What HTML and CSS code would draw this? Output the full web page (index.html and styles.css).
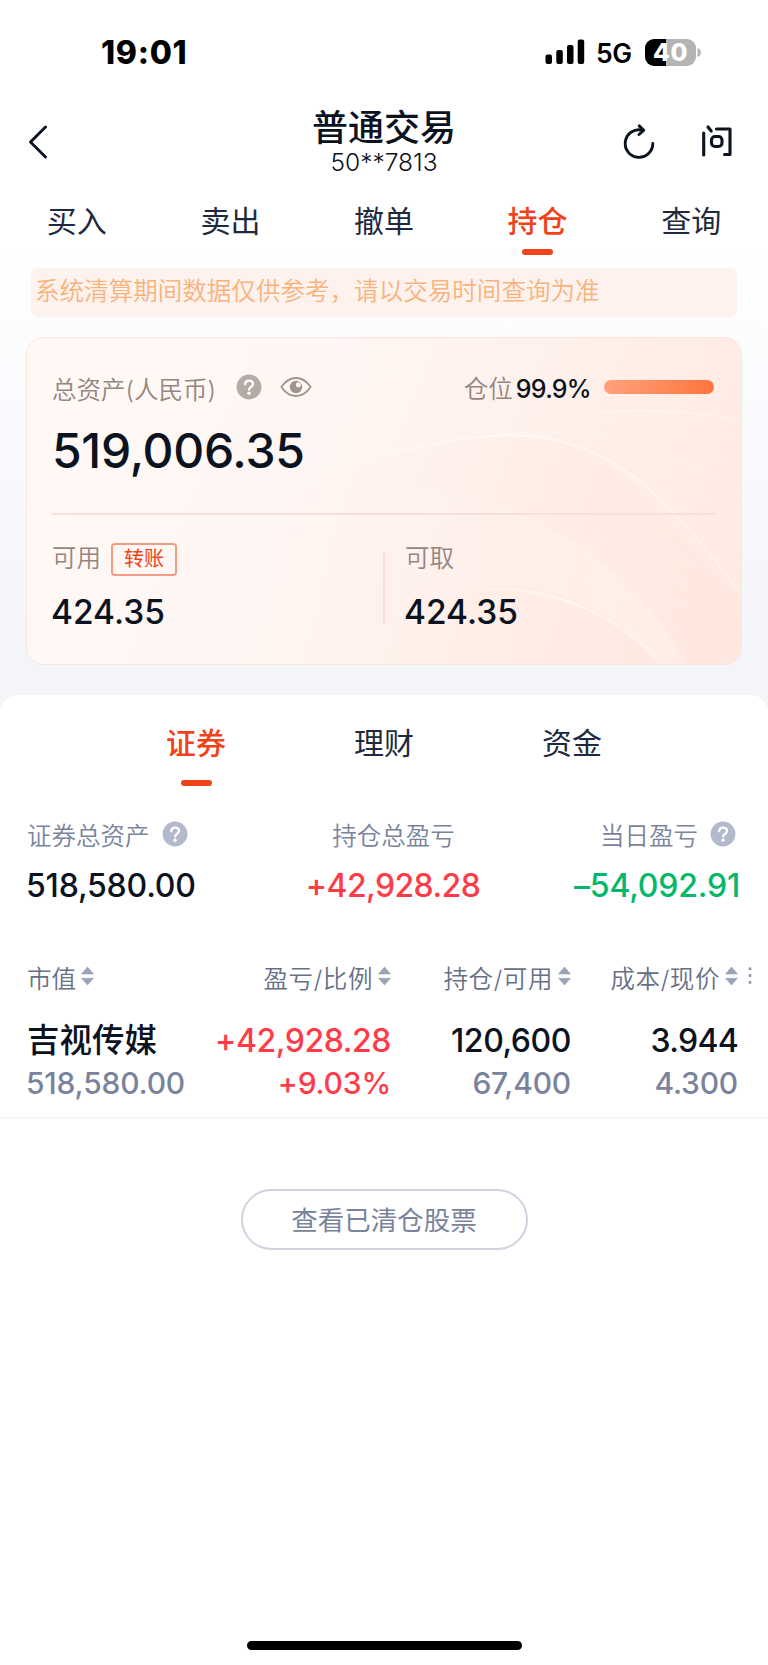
FILE: index.html
```html
<!DOCTYPE html>
<html lang="zh-CN">
<head>
<meta charset="utf-8">
<title>普通交易</title>
<link rel="stylesheet" href="styles.css">
</head>
<body>
<svg class="defs" width="0" height="0">
  <symbol id="help" viewBox="0 0 26 26">
    <circle cx="13" cy="13" r="12.4" fill="currentColor"/>
    <path d="M9.2 10.3c0-2.200 1.600-3.700 3.900-3.700s3.900 1.400 3.900 3.400c0 2.700-3.900 2.900-3.900 5.600" fill="none" stroke="#fff" stroke-width="2.300" stroke-linecap="round"/>
    <circle cx="13" cy="19.300" r="1.700" fill="#fff"/>
  </symbol>
  <symbol id="sort" viewBox="0 0 13 20">
    <path d="M6.500 1 12.500 8H.5Z M6.500 19 .5 12.300h12Z" fill="currentColor" stroke="currentColor" stroke-width=".6" stroke-linejoin="round"/>
  </symbol>
</svg>
<div class="screen">
  <div class="top">
    <div class="status">
      <span class="time">19:01</span>
      <div class="status-right">
        <svg class="signal" width="40" height="26" viewBox="0 0 40 26"><rect x="0.500" y="15.500" width="6.500" height="9.500" rx="2"/><rect x="11.300" y="11" width="6.500" height="14" rx="2"/><rect x="22" y="6" width="6.500" height="19" rx="2"/><rect x="32.700" y="0.500" width="6.500" height="24.500" rx="2"/></svg>
        <span class="net">5G</span>
        <div class="battery"><span class="level">40</span><svg class="nub" width="5" height="9" viewBox="0 0 5 9"><path d="M0.500 0C5 1.500 5 7.500 0.500 9Z" fill="#b4b4b4"/></svg></div>
      </div>
    </div>
    <div class="header">
      <svg class="back" width="20" height="34" viewBox="0 0 20 34"><path d="M17.500 2 2.500 17 17.500 32" fill="none" stroke="#0b1220" stroke-width="2.900" stroke-linecap="round" stroke-linejoin="round"/></svg>
      <div class="heading"><div class="title">普通交易</div><div class="account">50**7813</div></div>
      <div class="actions">
        <svg width="34" height="36" viewBox="0 0 34 36" fill="none" stroke="#0b1220" stroke-width="2.900" stroke-linecap="round" stroke-linejoin="round"><path d="M30.800 19.500A13.800 13.800 0 1 1 20.200 6.100"/><path d="M17.200 1.900 21.700 6.300 17 10.500"/></svg>
        <svg width="34" height="34" viewBox="0 0 34 34" fill="none" stroke="#0b1220" stroke-width="3.100" stroke-linecap="round" stroke-linejoin="round"><path d="M3.700 9V31"/><path d="M8 3 11.200 7"/><path d="M16.500 5H30V30.500H24.500"/><rect x="11.500" y="12.500" width="10.500" height="10" rx="3.500"/></svg>
      </div>
    </div>
    <div class="tabs">
      <div class="tab">买入</div><div class="tab">卖出</div><div class="tab">撤单</div><div class="tab active">持仓</div><div class="tab">查询</div>
    </div>
    <div class="notice">系统清算期间数据仅供参考，请以交易时间查询为准</div>
    <div class="card">
      <svg class="waves" viewBox="0 0 716 328" preserveAspectRatio="none">
        <defs>
          <linearGradient id="fa" x1="0" y1="0" x2="1" y2="0"><stop offset="0" stop-color="#fff" stop-opacity="0"/><stop offset=".5" stop-color="#fff" stop-opacity=".6"/><stop offset="1" stop-color="#fff" stop-opacity=".3"/></linearGradient>
          <linearGradient id="fb" x1="0" y1="0" x2="1" y2="0"><stop offset="0" stop-color="#ffd9cb" stop-opacity="0"/><stop offset="1" stop-color="#ffd9cb" stop-opacity=".15"/></linearGradient>
          <linearGradient id="fc" x1="0" y1="0" x2="1" y2="0"><stop offset="0" stop-color="#fff" stop-opacity="0"/><stop offset="1" stop-color="#fff" stop-opacity=".24"/></linearGradient>
          <pattern id="lines" width="12" height="6" patternUnits="userSpaceOnUse" patternTransform="rotate(8)"><path d="M0 3H12" stroke="#fff" stroke-opacity=".16"/></pattern>
        </defs>
        <path d="M250 145C370 115 430 97 490 98 590 99 640 190 716 262V328H250Z" fill="url(#fb)"/>
        <path d="M300 150C480 140 600 210 660 328H636C590 275 510 225 410 260Z" fill="url(#fc)"/>
        <path d="M500 94C570 68 640 70 716 82V262C640 180 590 99 500 98Z" fill="url(#lines)"/>
        <path d="M560 200C620 180 670 205 716 262V328H636C610 300 590 280 560 262Z" fill="url(#lines)"/>
        <path d="M250 145C370 115 430 97 490 98 590 99 650 170 716 257" fill="none" stroke="url(#fa)" stroke-width="2"/>
        <path d="M500 90C570 68 640 70 716 82" fill="none" stroke="url(#fa)" stroke-width="1.200"/>
        <path d="M430 257C510 240 590 275 636 328" fill="none" stroke="url(#fa)" stroke-width="2.500"/>
      </svg>
      <div class="card-top">
        <span class="label">总资产(人民币)</span>
        <svg class="help warm" width="26" height="26"><use href="#help"/></svg>
        <svg class="eye" width="32" height="22" viewBox="0 0 32 22"><path d="M1.300 11C5.500 5 10.500 2 16 2s10.500 3 14.700 9C26.500 17 21.500 20 16 20S5.500 17 1.300 11Z" fill="none" stroke="#a1948f" stroke-width="1.800" stroke-linejoin="round"/><circle cx="16" cy="11" r="6.200" fill="#a1948f"/><circle cx="18.400" cy="8.700" r="2.500" fill="#fff8f5"/></svg>
        <span class="label pos">仓位</span><span class="pct">99.9%</span>
        <div class="bar"></div>
      </div>
      <div class="total">519,006.35</div>
      <div class="split">
        <div class="cell"><div class="row"><span class="label">可用</span><span class="transfer">转账</span></div><div class="amount">424.35</div></div>
        <div class="cell second"><div class="row"><span class="label">可取</span></div><div class="amount">424.35</div></div>
      </div>
    </div>
  </div>
  <div class="sheet">
    <div class="subtabs"><div class="subtab active">证券</div><div class="subtab">理财</div><div class="subtab">资金</div></div>
    <div class="summary">
      <div class="stat"><div class="stat-label">证券总资产<svg class="help cool" width="26" height="26"><use href="#help"/></svg></div><div class="value">518,580.00</div></div>
      <div class="stat mid"><div class="stat-label">持仓总盈亏</div><div class="value red signed">+42,928.28</div></div>
      <div class="stat end"><div class="stat-label">当日盈亏<svg class="help cool" width="26" height="26"><use href="#help"/></svg></div><div class="value green">–54,092.91</div></div>
    </div>
    <div class="grid head">
      <div class="th left">市值<svg class="sort" width="13" height="20"><use href="#sort"/></svg></div>
      <div class="th">盈亏/比例<svg class="sort" width="13" height="20"><use href="#sort"/></svg></div>
      <div class="th">持仓/可用<svg class="sort" width="13" height="20"><use href="#sort"/></svg></div>
      <div class="th">成本/现价<svg class="sort" width="13" height="20"><use href="#sort"/></svg></div>
      <svg class="more" width="4" height="18" viewBox="0 0 4 18" fill="#8b93a7"><rect x=".7" y=".5" width="2.600" height="2.600"/><rect x=".7" y="7.300" width="2.600" height="2.600"/><rect x=".7" y="14.100" width="2.600" height="2.600"/></svg>
    </div>
    <div class="grid holding">
      <div class="td left"><div class="name">吉视传媒</div><div class="sub">518,580.00</div></div>
      <div class="td red"><div class="main">+42,928.28</div><div class="sub pc">+9.03%</div></div>
      <div class="td"><div class="main">120,600</div><div class="sub">67,400</div></div>
      <div class="td last"><div class="main">3.944</div><div class="sub">4.300</div></div>
    </div>
    <div class="closed">查看已清仓股票</div>
    <div class="home"></div>
  </div>
</div>
</body>
</html>
```
FILE: styles.css
```css
* { box-sizing: border-box; }
body { margin: 0; background: #fff; font-family: Inter, "Noto Sans CJK SC", sans-serif; color: #0b1220; }
svg { display: block; flex: none; }
.defs { position: absolute; }
.screen { width: 768px; height: 1665px; display: flex; flex-direction: column; overflow: hidden; background: #f3f5f9; }
.top { height: 695px; flex: none; background: linear-gradient(#fff 0, #fff 250px, #fbfcfe 360px, #f3f5f9 640px); }

.status { height: 104px; display: flex; justify-content: space-between; padding: 32px 66px 0 101px; color: #000; }
.time { font-size: 32px; line-height: 41px; font-weight: 800; letter-spacing: .7px; }
.status-right { display: flex; align-items: center; height: 40px; }
.signal { margin-top: -1px; }
.net { margin-left: 11px; width: 38px; font-size: 26.500px; font-weight: 600; line-height: 40px; letter-spacing: -.3px; padding-top: 2px; }
.battery { display: flex; align-items: center; margin-left: 11px; }
.level { width: 51px; height: 27px; border-radius: 9px; background: linear-gradient(90deg, #000 41%, #b4b4b4 41%); color: #fff; font-size: 24.500px; line-height: 27px; font-weight: 800; text-align: center; letter-spacing: .5px; }
.nub { margin-left: 1px; }

.header { height: 76px; display: grid; grid-template-columns: 1fr 200px 1fr; padding: 0 34px 0 28px; }
.back { margin-top: 21px; }
.heading { text-align: center; margin: 0 -6px 0 0; padding-top: 4px; }
.title { font-size: 36px; line-height: 40px; font-weight: 500; white-space: nowrap; }
.account { font-size: 24.500px; line-height: 28px; font-weight: 300; }
.actions { display: flex; justify-content: flex-end; gap: 44px; padding-top: 20px; }

.tabs { height: 88px; display: grid; grid-template-columns: repeat(5, 1fr); }
.tab { display: flex; flex-direction: column; align-items: center; font-size: 30px; line-height: 44px; padding-top: 19px; color: #20293d; }
.tab.active, .subtab.active { color: #f0431a; font-weight: 500; }
.tab.active::after, .subtab.active::after { content: ""; width: 31px; height: 6px; border-radius: 3px; background: #f0431a; }
.tab.active::after { margin-top: 6px; }

.notice { width: 706px; height: 49px; margin-left: 31px; padding-left: 4px; border-radius: 7px; background: #fdf2ee; color: #fab27c; font-size: 24.550px; line-height: 47px; font-weight: 350; white-space: nowrap; }

.card { position: relative; width: 716px; height: 328px; margin: 20px 0 0 26px; padding: 0 26px 0 25px; border: 1.500px solid #fee4dd; border-radius: 18px; overflow: hidden; background: linear-gradient(112deg, #fff9f5 0, #fff6f3 40%, #fff0ea 66%, #ffe9e2 100%); }
.waves { position: absolute; inset: 0; width: 100%; height: 100%; }
.card-top, .total, .split { position: relative; }
.card-top { display: flex; align-items: center; height: 50px; margin-top: 24px; }
.label { font-size: 24.500px; line-height: 34px; color: #94857f; font-weight: 350; white-space: nowrap; }
.card-top .label { padding-top: 5px; }
.help.warm { color: #b6aaa6; margin-left: 20px; }
.eye { margin-left: 18px; }
.card-top .pos { margin-left: auto; padding-top: 3px; }
.pct { margin-left: 3px; padding-top: 3px; font-size: 25px; font-weight: 500; letter-spacing: -.7px; }
.bar { width: 110px; height: 14px; margin-left: 13px; margin-right: 1px; border-radius: 7px; background: linear-gradient(90deg, #ffa27c, #ff753d); }
.total { height: 103px; font-size: 48px; line-height: 77px; font-weight: 500; letter-spacing: -.3px; border-bottom: 2px solid #f7e0dc; }
.split { display: grid; grid-template-columns: 331px 1fr; padding-top: 36px; }
.cell { height: 73px; }
.second { border-left: 2px solid #f9dcd9; padding-left: 20px; }
.row { display: flex; align-items: center; height: 34px; margin-top: -10px; }
.transfer { height: 33px; width: 66px; margin-left: 10px; border: 2px solid #f79a83; border-radius: 4px; color: #f0431a; font-size: 20px; line-height: 29px; text-align: center; margin-top: 2px; }
.amount { font-size: 33.500px; line-height: 40px; font-weight: 500; margin: 17px 0 0 -1px; }

.sheet { flex: 1; background: #fff; border-radius: 18px 18px 0 0; display: flex; flex-direction: column; }
.subtabs { height: 118px; display: grid; grid-template-columns: repeat(3, 188px); justify-content: center; }
.subtab { display: flex; flex-direction: column; align-items: center; font-size: 30px; line-height: 44px; padding-top: 26px; color: #20293d; }
.subtab.active::after { margin-top: 15px; }
.summary { display: flex; justify-content: space-between; height: 130px; padding: 4px 27px 0; }
.stat { width: 220px; }
.stat-label { display: flex; align-items: center; height: 34px; font-size: 24.500px; color: #7a839c; font-weight: 350; }
.help.cool { color: #b3b9cc; margin-left: 12px; }
.value { font-size: 32px; line-height: 40px; font-weight: 500; margin: 15px 0 0 -1px; letter-spacing: -.2px; white-space: nowrap; }
.signed { letter-spacing: -.6px; }
.mid { text-align: center; margin-left: 19px; }
.mid .stat-label { justify-content: center; }
.end { text-align: right; }
.end .value { margin-right: 1px; }
.end .stat-label { justify-content: flex-end; padding-right: 5px; }
.red, .red .sub { color: #ff3b47; }
.green { color: #05b76a; }
.grid { display: grid; grid-template-columns: 157px 207px 180px 167px 1fr; padding-left: 27px; }
.head { height: 70px; align-items: start; padding-top: 17px; }
.th { display: flex; justify-content: flex-end; align-items: center; height: 34px; font-size: 24.500px; color: #667086; font-weight: 350; letter-spacing: .6px; white-space: nowrap; }
.th.left { justify-content: flex-start; letter-spacing: 0; }
.sort { color: #9aa3b7; margin-left: 5px; margin-top: -2px; }
.more { margin: 7px 0 0 10px; }
.holding { height: 106px; padding-top: 4px; border-bottom: 2px solid #f5f6f9; }
.td { text-align: right; font-weight: 500; }
.td.left { text-align: left; white-space: nowrap; margin-left: -1px; }
.name { font-size: 32.500px; line-height: 48px; padding-left: 1px; }
.main { font-size: 32px; line-height: 48px; letter-spacing: -.45px; }
.last .main { letter-spacing: -.7px; }
.sub { font-size: 30px; line-height: 36px; color: #7a839c; font-weight: 500; letter-spacing: -.2px; }
.closed { width: 287px; height: 61px; margin: 70px auto 0; border: 2px solid #cfd3e0; border-radius: 31px; text-align: center; font-size: 26.500px; line-height: 59px; color: #7a839c; }
.home { width: 275px; height: 9px; border-radius: 5px; background: #000; margin: auto auto 15px; }
```
